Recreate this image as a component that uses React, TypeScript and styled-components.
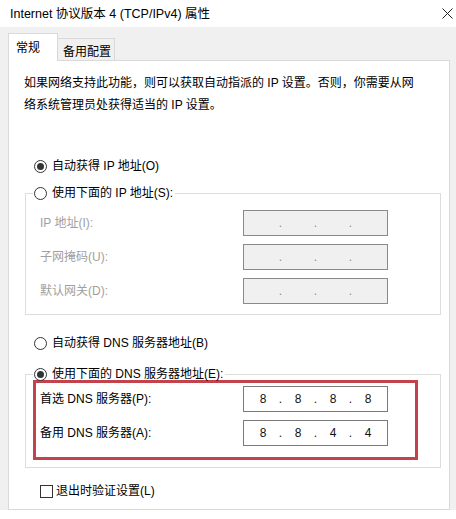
import React from "react";
import styled, { createGlobalStyle } from "styled-components";

const Global = createGlobalStyle`
  html, body { margin: 0; padding: 0; background: #ffffff; }
  body {
    font-family: "Liberation Sans", "Noto Sans CJK SC", sans-serif;
    font-size: 12px;
    color: #000;
  }
  * { box-sizing: border-box; }
`;

const Page = styled.div`
  width: 456px;
  height: 519px;
  overflow: hidden;
  background: #ffffff;
  display: flex;
  flex-direction: column;
`;

const Window = styled.div`
  height: 510px;
  flex: none;
  background: #f0f0f0;
  display: flex;
  flex-direction: column;
`;

const TitleBar = styled.div`
  height: 27px;
  flex: none;
  background: #ffffff;
  display: flex;
  align-items: center;
  justify-content: space-between;
  padding: 0 3px 0 10px;
`;

const Title = styled.span`
  font-size: 12.5px;
  line-height: 16px;
  color: #000;
`;

const CloseButton = styled.div`
  width: 12px;
  height: 12px;
  display: flex;
  align-items: center;
  justify-content: center;
`;

const Body = styled.div`
  flex: 1;
  min-height: 0;
  display: flex;
  flex-direction: column;
  padding: 0 6px 0 8px;
`;

const TabStrip = styled.div`
  height: 33px;
  flex: none;
  display: flex;
  align-items: flex-end;
`;

const Tab = styled.div<{ $active?: boolean }>`
  position: relative;
  z-index: ${(p) => (p.$active ? 1 : 0)};
  width: ${(p) => (p.$active ? 50 : 57)}px;
  height: ${(p) => (p.$active ? 28 : 22)}px;
  margin-bottom: ${(p) => (p.$active ? -1 : 0)}px;
  background: ${(p) => (p.$active ? "#ffffff" : "#f0f0f0")};
  border: 1px solid #d9d9d9;
  border-bottom: none;
  border-left: ${(p) => (p.$active ? "1px solid #d9d9d9" : "none")};
  display: flex;
  align-items: center;
  padding-left: ${(p) => (p.$active ? 7 : 5)}px;
  padding-top: ${(p) => (p.$active ? 0 : 4)}px;
  font-size: 12px;
  line-height: 16px;
  color: #000;
`;

const Panel = styled.div`
  flex: 1;
  min-height: 0;
  background: #ffffff;
  border: 1px solid #d9d9d9;
  padding: 11px 8px 0 15px;
  display: flex;
  flex-direction: column;
`;

const Description = styled.p`
  margin: 0;
  font-size: 12px;
  line-height: 22px;
  color: #000;
`;

const OptionRow = styled.div<{ $indent?: number; $top?: number; $disabled?: boolean }>`
  display: flex;
  align-items: center;
  height: 18px;
  padding-left: ${(p) => p.$indent ?? 0}px;
  margin-top: ${(p) => p.$top ?? 0}px;
  font-size: 12px;
  line-height: 18px;
  color: ${(p) => (p.$disabled ? "#a0a0a0" : "#000")};
  white-space: nowrap;
`;

const RadioCircle = styled.span<{ $checked?: boolean }>`
  width: 13px;
  height: 13px;
  flex: none;
  border-radius: 50%;
  border: 1px solid #333333;
  background: #ffffff;
  margin-right: 5px;
  display: flex;
  align-items: center;
  justify-content: center;
  &::after {
    content: "";
    width: 7px;
    height: 7px;
    border-radius: 50%;
    background: ${(p) => (p.$checked ? "#333333" : "transparent")};
  }
`;

const CheckBox = styled.span`
  width: 13px;
  height: 13px;
  flex: none;
  border: 1px solid #333333;
  background: #ffffff;
  margin-right: 3px;
`;

const Group = styled.fieldset<{ $top?: number; $padBottom: number }>`
  margin: ${(p) => p.$top ?? 0}px 0 0 1px;
  padding: 0 0 ${(p) => p.$padBottom}px 0;
  border: 1px solid #dcdcdc;
  min-width: 0;
`;

const Legend = styled.legend`
  margin-left: 7px;
  padding: 0 2px 0 1px;
`;

const FieldGrid = styled.div<{ $padTop: number; $padLeft?: number; $padBottom?: number }>`
  display: grid;
  grid-template-columns: 203px 145px;
  grid-auto-rows: 26px;
  row-gap: 8px;
  align-items: center;
  padding: ${(p) => p.$padTop}px 0 ${(p) => p.$padBottom ?? 0}px ${(p) => p.$padLeft ?? 14}px;
`;

const FieldLabel = styled.span<{ $disabled?: boolean }>`
  font-size: 12px;
  line-height: 16px;
  color: ${(p) => (p.$disabled ? "#a0a0a0" : "#000")};
  white-space: nowrap;
`;

const IpBox = styled.div<{ $disabled?: boolean }>`
  height: 26px;
  border: 1px solid ${(p) => (p.$disabled ? "#8a8a8a" : "#7a7a7a")};
  background: ${(p) => (p.$disabled ? "#f0f0f0" : "#ffffff")};
  display: flex;
  align-items: center;
  padding-left: 7px;
  color: ${(p) => (p.$disabled ? "#8a8a8a" : "#111")};
  font-size: 12px;
  line-height: 16px;
`;

const Octet = styled.span`
  width: 24px;
  text-align: center;
`;

const Dot = styled.span`
  width: 11px;
  text-align: center;
`;

const Highlight = styled.div`
  margin: -3px 0 0 7px;
  width: 385px;
  border: 3px solid #c3424b;
`;

type IpProps = { value?: string[]; disabled?: boolean };

const IpField: React.FC<IpProps> = ({ value, disabled }) => {
  const parts = value ?? ["", "", "", ""];
  return (
    <IpBox $disabled={disabled}>
      {parts.map((p, i) => (
        <React.Fragment key={i}>
          <Octet>{p}</Octet>
          {i < 3 && <Dot>.</Dot>}
        </React.Fragment>
      ))}
    </IpBox>
  );
};

const Radio: React.FC<{ checked?: boolean; label: string; indent?: number; top?: number }> = ({
  checked,
  label,
  indent,
  top,
}) => (
  <OptionRow $indent={indent} $top={top}>
    <RadioCircle $checked={checked} />
    {label}
  </OptionRow>
);

export default function App() {
  return (
    <>
      <Global />
      <Page>
        <Window>
          <TitleBar>
            <Title>Internet 协议版本 4 (TCP/IPv4) 属性</Title>
            <CloseButton>
              <svg width="11" height="11" viewBox="0 0 11 11">
                <path d="M0.5 0.5 L10.5 10.5 M10.5 0.5 L0.5 10.5" stroke="#222" strokeWidth="1" fill="none" />
              </svg>
            </CloseButton>
          </TitleBar>
          <Body>
            <TabStrip>
              <Tab $active>常规</Tab>
              <Tab>备用配置</Tab>
            </TabStrip>
            <Panel>
              <Description>
                如果网络支持此功能，则可以获取自动指派的 IP 设置。否则，你需要从网
                <br />
                络系统管理员处获得适当的 IP 设置。
              </Description>

              <Radio checked label="自动获得 IP 地址(O)" indent={10} top={41} />

              <Group $top={9} $padBottom={10}>
                <Legend>
                  <Radio label="使用下面的 IP 地址(S):" />
                </Legend>
                <FieldGrid $padTop={8}>
                  <FieldLabel $disabled>IP 地址(I):</FieldLabel>
                  <IpField disabled />
                  <FieldLabel $disabled>子网掩码(U):</FieldLabel>
                  <IpField disabled />
                  <FieldLabel $disabled>默认网关(D):</FieldLabel>
                  <IpField disabled />
                </FieldGrid>
              </Group>

              <Radio label="自动获得 DNS 服务器地址(B)" indent={10} top={19} />

              <Group $top={13} $padBottom={7}>
                <Legend>
                  <Radio checked label="使用下面的 DNS 服务器地址(E):" />
                </Legend>
                <Highlight>
                  <FieldGrid $padTop={3} $padLeft={4} $padBottom={11}>
                    <FieldLabel>首选 DNS 服务器(P):</FieldLabel>
                    <IpField value={["8", "8", "8", "8"]} />
                    <FieldLabel>备用 DNS 服务器(A):</FieldLabel>
                    <IpField value={["8", "8", "4", "4"]} />
                  </FieldGrid>
                </Highlight>
              </Group>

              <OptionRow $indent={16} $top={14}>
                <CheckBox />
                退出时验证设置(L)
              </OptionRow>
            </Panel>
          </Body>
        </Window>
      </Page>
    </>
  );
}
